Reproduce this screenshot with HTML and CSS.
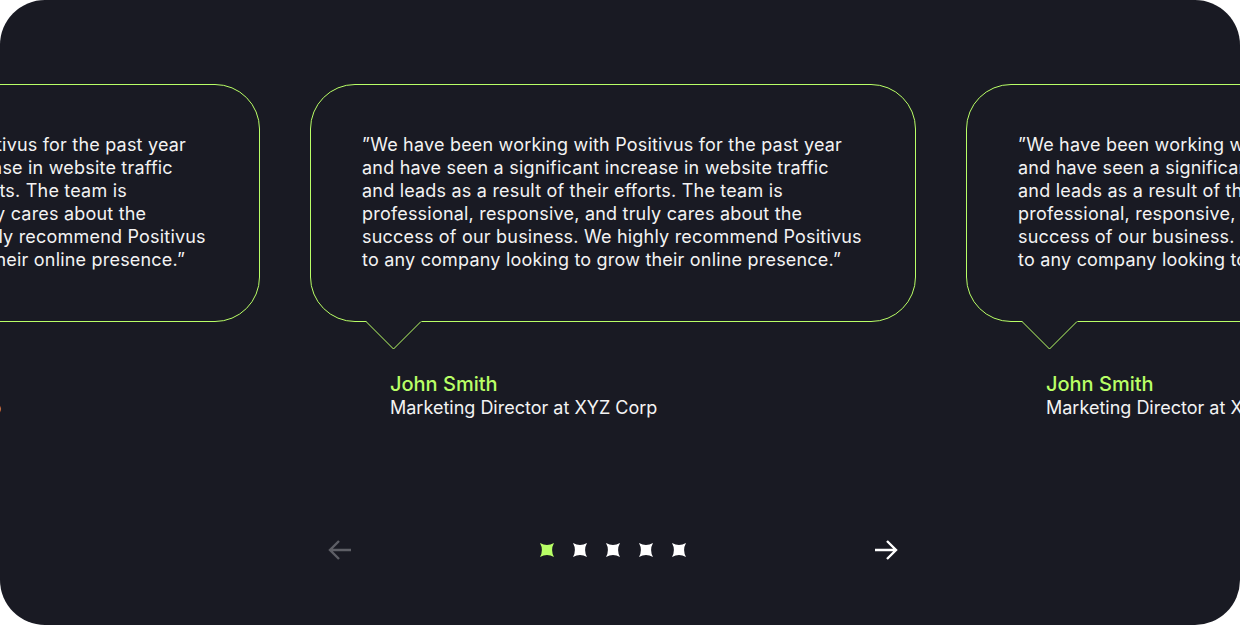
FILE: index.html
```html
<!DOCTYPE html>
<html lang="en">
<head>
<meta charset="utf-8">
<title>Testimonials</title>
<link rel="stylesheet" href="styles.css">
</head>
<body>
<section class="testimonials">
  <div class="track">
    <article class="item">
      <div class="bubble">
        <p>”We have been working with Positivus for the past year<br>and have seen a significant increase in website traffic<br>and leads as a result of their efforts. The team is<br>professional, responsive, and truly cares about the<br>success of our business. We highly recommend Positivus<br>to any company looking to grow their online presence.”</p>
        <svg class="tail" width="56" height="29" viewBox="0 0 56 29"><polygon points="0,0 28,28 56,0" fill="#191A23"/><polyline points="0,0.5 27.5,28 55,0.5" fill="none" stroke="#B9FF66" stroke-width="1"/></svg>
      </div>
      <div class="author"><div class="name">John Smith</div><div class="role">Marketing Director at XYZ Corp</div></div>
    </article>
    <article class="item">
      <div class="bubble">
        <p>”We have been working with Positivus for the past year<br>and have seen a significant increase in website traffic<br>and leads as a result of their efforts. The team is<br>professional, responsive, and truly cares about the<br>success of our business. We highly recommend Positivus<br>to any company looking to grow their online presence.”</p>
        <svg class="tail" width="56" height="29" viewBox="0 0 56 29"><polygon points="0,0 28,28 56,0" fill="#191A23"/><polyline points="0,0.5 27.5,28 55,0.5" fill="none" stroke="#B9FF66" stroke-width="1"/></svg>
      </div>
      <div class="author"><div class="name">John Smith</div><div class="role">Marketing Director at XYZ Corp</div></div>
    </article>
    <article class="item">
      <div class="bubble">
        <p>”We have been working with Positivus for the past year<br>and have seen a significant increase in website traffic<br>and leads as a result of their efforts. The team is<br>professional, responsive, and truly cares about the<br>success of our business. We highly recommend Positivus<br>to any company looking to grow their online presence.”</p>
        <svg class="tail" width="56" height="29" viewBox="0 0 56 29"><polygon points="0,0 28,28 56,0" fill="#191A23"/><polyline points="0,0.5 27.5,28 55,0.5" fill="none" stroke="#B9FF66" stroke-width="1"/></svg>
      </div>
      <div class="author"><div class="name">John Smith</div><div class="role">Marketing Director at XYZ Corp</div></div>
    </article>
  </div>
  <nav class="pager">
    <button class="arrow disabled" aria-label="Previous">
      <svg width="26" height="22" viewBox="0 0 26 22"><path d="M24 11H3M12 2L3 11L12 20" fill="none" stroke="currentColor" stroke-width="2.4"/></svg>
    </button>
    <div class="dots">
      <svg class="dot active" width="14" height="14" viewBox="0 0 14 14"><path d="M0 0Q7 3.8 14 0Q10.2 7 14 14Q7 10.2 0 14Q3.8 7 0 0Z"/></svg>
      <svg class="dot" width="14" height="14" viewBox="0 0 14 14"><path d="M0 0Q7 3.8 14 0Q10.2 7 14 14Q7 10.2 0 14Q3.8 7 0 0Z"/></svg>
      <svg class="dot" width="14" height="14" viewBox="0 0 14 14"><path d="M0 0Q7 3.8 14 0Q10.2 7 14 14Q7 10.2 0 14Q3.8 7 0 0Z"/></svg>
      <svg class="dot" width="14" height="14" viewBox="0 0 14 14"><path d="M0 0Q7 3.8 14 0Q10.2 7 14 14Q7 10.2 0 14Q3.8 7 0 0Z"/></svg>
      <svg class="dot" width="14" height="14" viewBox="0 0 14 14"><path d="M0 0Q7 3.8 14 0Q10.2 7 14 14Q7 10.2 0 14Q3.8 7 0 0Z"/></svg>
    </div>
    <button class="arrow" aria-label="Next">
      <svg width="26" height="22" viewBox="0 0 26 22"><path d="M2 11H23M14 2L23 11L14 20" fill="none" stroke="currentColor" stroke-width="2.4"/></svg>
    </button>
  </nav>
</section>
</body>
</html>
```

FILE: styles.css
```css
* { box-sizing: border-box; }
html, body { margin: 0; padding: 0; background: #ffffff; }
body { font-family: "Inter", "Noto Sans", sans-serif; }

.testimonials {
  width: 1240px;
  height: 625px;
  background: #191A23;
  border-radius: 45px;
  overflow: hidden;
  padding-top: 84px;
}

.track {
  display: flex;
  gap: 50px;
  margin-left: -346px;
}

.item {
  flex: 0 0 606px;
}

.bubble {
  position: relative;
  height: 238px;
  border: 1px solid #B9FF66;
  border-radius: 45px;
  padding: 48px 0 0 51px;
}

.bubble p {
  margin: 0;
  color: #F3F3F3;
  font-size: 18px;
  line-height: 23px;
  white-space: nowrap;
  letter-spacing: 0.2px;
}

.tail {
  position: absolute;
  left: 55px;
  top: 236px;
  display: block;
}

.author {
  margin: 50px 0 0 80px;
}

.name {
  color: #B9FF66;
  font-size: 20px;
  font-weight: 500;
  line-height: 24px;
}

.role {
  color: #F3F3F3;
  font-size: 18px;
  line-height: 24px;
}

.pager {
  width: 572px;
  margin: 119px 0 0 327px;
  display: flex;
  align-items: center;
  justify-content: space-between;
}

.arrow {
  background: none;
  border: 0;
  padding: 0;
  color: #ffffff;
  display: flex;
}

.arrow.disabled { color: #5e5f66; }

.dots {
  display: flex;
  gap: 19px;
}

.dot { display: block; fill: #ffffff; }
.dot.active { fill: #B9FF66; }
```
